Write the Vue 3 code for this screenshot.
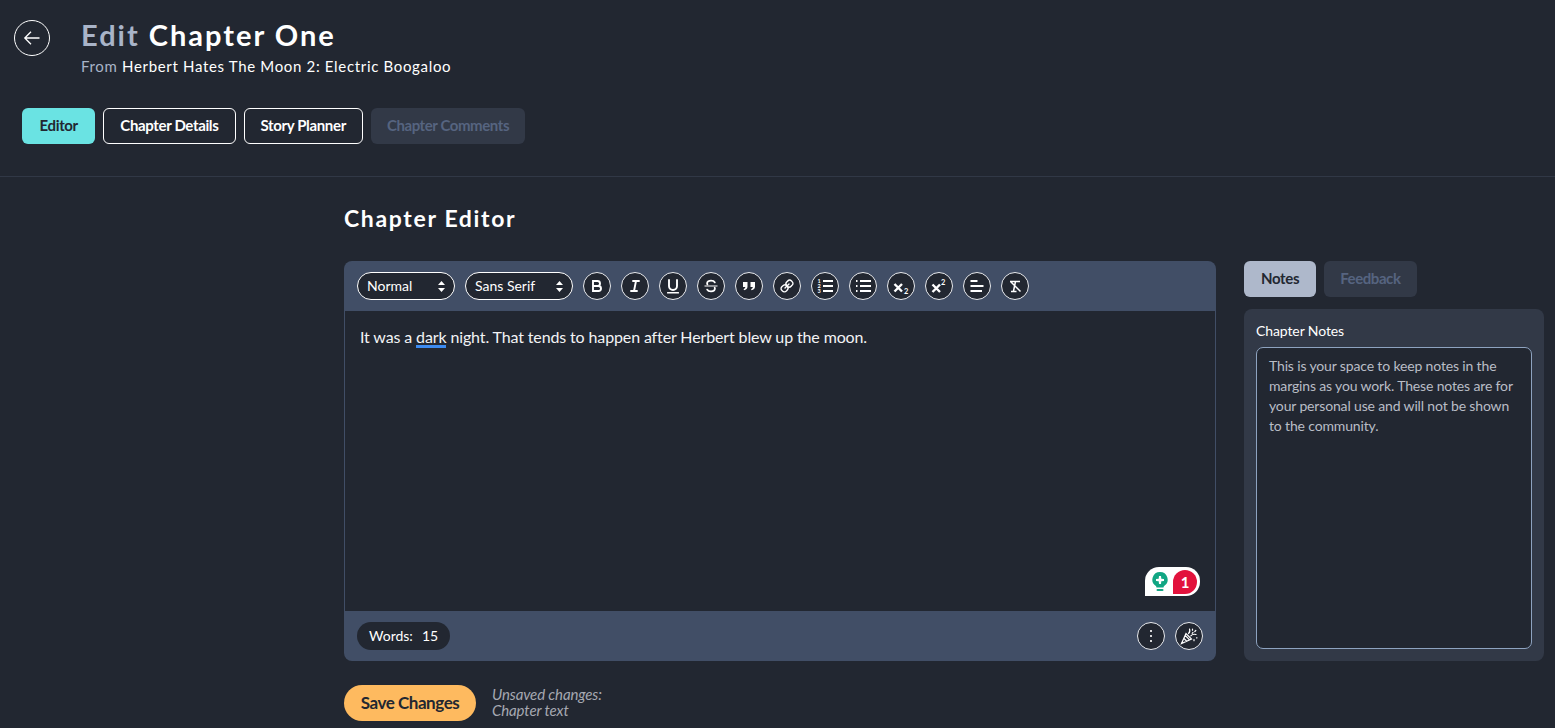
<template>
    <div class="page">
        <header class="topbar">
            <div class="title-row">
                <button class="back" title="Back">
                    <svg width="18" height="18" viewBox="0 0 18 18" fill="none" stroke="#fff" stroke-width="1.3">
                        <path d="M16.5 9H1.8M8 2.8 1.8 9 8 15.2" />
                    </svg>
                </button>
                <div class="titles">
                    <h1><span class="muted">Edit</span> Chapter One</h1>
                    <div class="from"><span class="muted">From</span> Herbert Hates The Moon 2: Electric Boogaloo</div>
                </div>
            </div>
            <nav class="tabs">
                <button class="btn active">Editor</button>
                <button class="btn outline">Chapter Details</button>
                <button class="btn outline">Story Planner</button>
                <button class="btn off">Chapter Comments</button>
            </nav>
        </header>

        <main class="content">
            <h2>Chapter Editor</h2>
            <div class="columns">
                <section class="editor">
                    <div class="toolbar">
                        <div class="select sel-format">Normal<svg class="updown" width="7" height="11" viewBox="0 0 7 11" fill="#fff"><path d="M3.5 0 7 4H0zM3.5 11 0 7h7z" /></svg></div>
                        <div class="select sel-font">Sans Serif<svg class="updown" width="7" height="11" viewBox="0 0 7 11" fill="#fff"><path d="M3.5 0 7 4H0zM3.5 11 0 7h7z" /></svg></div>
                        <button v-for="t in tools" :key="t.name" class="tool" :title="t.name">
                            <svg width="18" height="18" viewBox="0 0 18 18" fill="none" stroke="#fff" stroke-width="1.6" stroke-linecap="round" v-html="t.svg"></svg>
                        </button>
                    </div>
                    <div class="body">
                        <p>It was a <span class="flag">dark</span> night. That tends to happen after Herbert blew up the moon.</p>
                        <div class="grammar">
                            <svg width="16" height="20" viewBox="0 0 16 20">
                                <path fill="#11a683" d="M8 0a7.600 7.600 0 0 0-4.400 13.800c.6.500.8 1 .9 1.700h7c.1-.7.300-1.200.9-1.700A7.600 7.600 0 0 0 8 0z" />
                                <rect fill="#11a683" x="4.500" y="17" width="7" height="2" rx="1" />
                                <path fill="#fff" d="M7 4h2l.3 2.700L12 7v2l-2.700.3L9 12H7l-.3-2.700L4 9V7l2.700-.3z" />
                            </svg>
                            <span class="count">1</span>
                        </div>
                    </div>
                    <div class="statusbar">
                        <div class="words">Words:<span>15</span></div>
                        <div class="status-tools">
                            <button class="tool" title="More">
                                <svg width="18" height="18" viewBox="0 0 18 18" fill="#fff"><circle cx="9" cy="4" r="1.100" /><circle cx="9" cy="9" r="1.100" /><circle cx="9" cy="14" r="1.100" /></svg>
                            </button>
                            <button class="tool" title="Celebrate">
                                <svg width="18" height="18" viewBox="0 0 18 18" fill="none" stroke="#fff" stroke-width="1.200" stroke-linecap="round">
                                    <path d="M6 6.500 1.500 16.500l10-4.500zM4 11.500l2.500 2.500M5.200 8.500l4.200 4.200" />
                                    <path d="M8.500 6.500c1.300-1 1.700-2.500 1-4.500M10.800 8.800c1.300-1.400 2.900-1.900 5.200-1.300M12.500 2v1.200M15.800 3.500l-1 1M14 12.500v1.200M16.500 10.800h.5M13 5.500l-.8.8" />
                                </svg>
                            </button>
                        </div>
                    </div>
                </section>

                <aside class="side">
                    <div class="side-tabs">
                        <button class="btn notes">Notes</button>
                        <button class="btn off">Feedback</button>
                    </div>
                    <div class="notes-card">
                        <label>Chapter Notes</label>
                        <div class="notes-box">This is your space to keep notes in the margins as you work. These notes are for your personal use and will not be shown to the community.</div>
                    </div>
                </aside>
            </div>

            <div class="save-row">
                <button class="save">Save Changes</button>
                <div class="unsaved">Unsaved changes:<br />Chapter text</div>
            </div>
        </main>
    </div>
</template>

<script setup>
const tools = [
    {
        name: 'Bold',
        svg: '<path stroke-width="1.900" d="M5 4h4.500a2.500 2.500 0 0 1 0 5H5zM5 9h5.500a2.500 2.500 0 0 1 0 5H5z" />'
    },
    {
        name: 'Italic',
        svg: '<path stroke-width="1.900" d="M7 4h6M5 14h6M8 14l2-10" />'
    },
    {
        name: 'Underline',
        svg: '<path stroke-width="1.900" d="M5 3v6a4 4 0 0 0 8 0V3" /><rect x="3" y="15" width="12" height="1.400" rx=".5" fill="#fff" stroke="none" />'
    },
    {
        name: 'Strike',
        svg: '<path stroke-width="1.200" stroke-linecap="butt" d="M2.500 9h13" /><path stroke-width="1.800" d="M12.800 5.400C12.200 4.200 10.700 3.600 9 3.600 7 3.600 5.100 4.600 5.100 6.300c0 .4.100.8.300 1.100M12.700 10.800c.2.300.2.500.2.800 0 1.700-1.900 2.800-3.900 2.800-1.700 0-3.200-.6-3.800-1.800" />'
    },
    {
        name: 'Quote',
        svg: '<path fill="#fff" stroke="none" d="M3 5h4.500v4.500c0 2.100-1.300 3.500-3.500 3.800l-.4-1.400c1-.2 1.600-.8 1.700-1.900H3zM10.500 5H15v4.500c0 2.100-1.300 3.500-3.500 3.800l-.4-1.400c1-.2 1.600-.8 1.700-1.900h-2.300z" />'
    },
    {
        name: 'Link',
        svg: '<g transform="matrix(-1 0 0 1 18 0)" stroke-width="1.400"><path d="M7 7l4 4" /><path d="M8.900 4.600a3.500 3.500 0 0 1 .4 4.700 3.500 3.500 0 0 1-4.700-.4C3.200 7.500 2 6.400 4.200 4.200S7.500 3.200 8.900 4.600z" /><path d="M13.400 9.100a3.500 3.500 0 0 0-4.700-.4 3.500 3.500 0 0 0 .4 4.700c1.400 1.400 2.500 2.500 4.700.4s1-3.300-.4-4.700z" /></g>'
    },
    {
        name: 'Ordered list',
        svg: '<path stroke-width="2" stroke-linecap="butt" d="M7 4h10M7 9h10M7 14h10" /><text x="1.500" y="6" class="mini">1</text><text x="1.500" y="11" class="mini">2</text><text x="1.500" y="16" class="mini">3</text>'
    },
    {
        name: 'Bullet list',
        svg: '<path stroke-width="2" stroke-linecap="butt" d="M6 4h11M6 9h11M6 14h11M2 4h1.500M2 9h1.500M2 14h1.500" />'
    },
    {
        name: 'Subscript',
        svg: '<path stroke-width="2.400" stroke-linecap="butt" d="M2.500 7l7.500 7.500M10 7l-7.500 7.500" /><text x="12" y="16.500" class="mini sub">2</text>'
    },
    {
        name: 'Superscript',
        svg: '<path stroke-width="2.400" stroke-linecap="butt" d="M2.500 7.500l7.500 7.500M10 7.500l-7.500 7.500" /><text x="11" y="7.500" class="mini sub">2</text>'
    },
    {
        name: 'Align',
        svg: '<path stroke-width="2" stroke-linecap="butt" d="M2.500 4h7M2.500 9h13M2.500 14h11.500" />'
    },
    {
        name: 'Clear format',
        svg: '<path stroke-width="1.500" stroke-linecap="butt" d="M4 4.500h10M9.500 4.500l-2 9.500M5 14.500h5.500M4.500 4.500l10 10" />'
    }
]
</script>

<style scoped>
.page {
    min-height: 728px;
    height: 728px;
    overflow: hidden;
    background: #222731;
    color: #fff;
    font-family: Lato, "Liberation Sans", sans-serif;
}

button {
    font-family: inherit;
}

.topbar {
    height: 177px;
    box-sizing: border-box;
    border-bottom: 1px solid #313846;
    padding: 20px 0 0 14px;
}

.title-row {
    display: flex;
    align-items: flex-start;
}

.back {
    width: 36px;
    height: 36px;
    border: 1px solid #fff;
    border-radius: 50%;
    background: transparent;
    padding: 0;
    display: flex;
    align-items: center;
    justify-content: center;
}

.titles {
    margin-left: 31px;
}

h1 {
    margin: -1px 0 0;
    font-size: 29px;
    line-height: 32px;
    font-weight: 700;
    letter-spacing: 2px;
}

.muted {
    color: #a9b4c8;
}

.from {
    margin-top: 5px;
    font-size: 15px;
    line-height: 20px;
    letter-spacing: 0.67px;
}

.tabs {
    display: flex;
    gap: 8px;
    margin: 32px 0 0 8px;
}

.btn {
    height: 36px;
    box-sizing: border-box;
    border-radius: 6px;
    padding: 0 16px 2px;
    border: 1px solid transparent;
    font-size: 15px;
    letter-spacing: -0.35px;
    font-weight: 700;
    display: flex;
    align-items: center;
}

.btn.active {
    background: #6ae3e3;
    color: #222731;
    padding: 0 16.5px 2px;
}

.btn.outline {
    background: transparent;
    border-color: #fff;
    color: #fff;
}

.btn.off {
    background: #323947;
    color: #566480;
    border: 0;
    letter-spacing: -0.42px;
}

.btn.notes {
    background: #aeb8cb;
    color: #222731;
}

.content {
    margin-left: 344px;
    width: 1200px;
}

h2 {
    margin: 0;
    padding-top: 27px;
    font-size: 23px;
    line-height: 28px;
    font-weight: 700;
    letter-spacing: 1.65px;
}

.columns {
    display: flex;
    margin-top: 29px;
    gap: 28px;
}

.editor {
    width: 872px;
    height: 400px;
    box-sizing: border-box;
    border-radius: 8px;
    overflow: hidden;
    background: #414e66;
    padding: 0 1px;
    display: flex;
    flex-direction: column;
}

.toolbar {
    height: 50px;
    flex: none;
    display: flex;
    align-items: center;
    gap: 10px;
    padding-left: 12px;
}

.select {
    height: 28px;
    box-sizing: border-box;
    background: #222731;
    border: 1px solid #fff;
    border-radius: 14px;
    padding: 0 9px 2px;
    font-size: 14px;
    display: flex;
    align-items: center;
    justify-content: space-between;
}

.updown {
    margin-top: 2px;
}

.sel-format {
    width: 98px;
}

.sel-font {
    width: 108px;
}

.tool {
    width: 28px;
    height: 28px;
    border-radius: 50%;
    border: 1px solid #e8eaee;
    background: #222731;
    padding: 0;
    display: flex;
    align-items: center;
    justify-content: center;
}

.tool :deep(.mini) {
    font-family: Lato, sans-serif;
    font-size: 5.500px;
    font-weight: 700;
    fill: #fff;
    stroke: none;
}

.tool :deep(.mini.sub) {
    font-size: 7.500px;
}

.body {
    flex: 1;
    background: #222731;
    padding: 17px 15px;
    font-size: 16px;
    line-height: 18px;
    letter-spacing: -0.13px;
    position: relative;
}

.body p {
    margin: 0;
    color: #f2f3f5;
}

.flag {
    display: inline-block;
    border-bottom: 3px solid #3d8bf0;
    line-height: 17px;
}

.grammar {
    position: absolute;
    right: 15px;
    bottom: 15px;
    width: 55px;
    height: 29px;
    box-sizing: border-box;
    background: #fff;
    border-radius: 14px 14px 14px 0;
    display: flex;
    align-items: center;
    justify-content: space-between;
    padding: 1px 3px 0 7px;
}

.count {
    width: 24px;
    height: 24px;
    border-radius: 50% 50% 50% 0;
    background: #e2123c;
    font-size: 15px;
    font-weight: 700;
    display: flex;
    align-items: center;
    justify-content: center;
}

.statusbar {
    height: 50px;
    flex: none;
    display: flex;
    align-items: center;
    justify-content: space-between;
    padding: 0 12px;
}

.words {
    height: 28px;
    border-radius: 14px;
    background: #222731;
    padding: 0 12px 1px;
    box-sizing: border-box;
    font-size: 14px;
    display: flex;
    align-items: center;
    gap: 9px;
}

.status-tools {
    display: flex;
    gap: 10px;
}

.side {
    width: 300px;
}

.side-tabs {
    display: flex;
    gap: 8px;
}

.notes-card {
    margin-top: 12px;
    height: 352px;
    box-sizing: border-box;
    background: #323947;
    border-radius: 8px;
    padding: 12px;
}

.notes-card label {
    display: block;
    font-size: 14px;
    line-height: 20px;
    letter-spacing: -0.1px;
}

.notes-box {
    margin-top: 6px;
    height: 302px;
    box-sizing: border-box;
    border: 1px solid #8ea3c0;
    border-radius: 7px;
    background: #222731;
    padding: 8px 12px;
    font-size: 14px;
    letter-spacing: -0.15px;
    line-height: 20px;
    color: #b9bdc6;
}

.save-row {
    margin-top: 24px;
    display: flex;
    align-items: center;
    gap: 16px;
}

.save {
    height: 36px;
    width: 132px;
    border: none;
    border-radius: 18px;
    background: #feba5f;
    color: #222731;
    font-size: 17px;
    letter-spacing: -0.45px;
    font-weight: 700;
    padding: 0 0 2px;
}

.unsaved {
    margin-top: -2px;
    font-size: 15px;
    letter-spacing: -0.12px;
    line-height: 16px;
    font-style: italic;
    color: #a6a9b1;
}
</style>

<style>
html, body {
    background: #222731;
}
</style>
